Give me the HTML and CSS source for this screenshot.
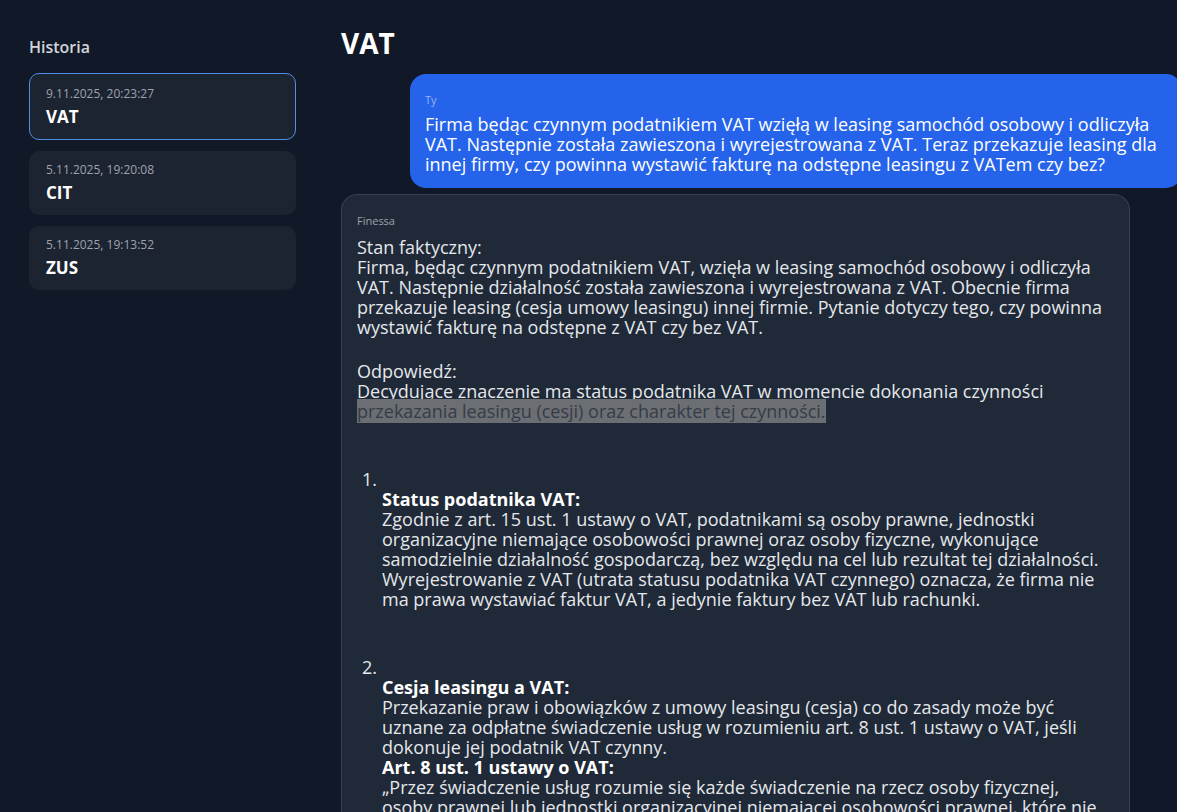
FILE: index.html
```html
<!DOCTYPE html>
<html lang="pl">
  <head>
    <meta charset="UTF-8" />
    <title>Finessa – VAT</title>
    <link rel="stylesheet" href="styles.css">
  </head>
  <body>
    <aside class="sidebar">
      <h2 class="sidebar-title">Historia</h2>
      <div class="history">
        <div class="history-item active">
          <div class="history-date">9.11.2025, 20:23:27</div>
          <div class="history-name">VAT</div>
        </div>
        <div class="history-item">
          <div class="history-date">5.11.2025, 19:20:08</div>
          <div class="history-name">CIT</div>
        </div>
        <div class="history-item">
          <div class="history-date">5.11.2025, 19:13:52</div>
          <div class="history-name">ZUS</div>
        </div>
      </div>
    </aside>

    <main class="chat">
      <h1 class="chat-title">VAT</h1>

      <div class="msg msg-user">
        <div class="msg-author">Ty</div>
        <div class="msg-text">Firma będąc czynnym podatnikiem VAT wzięłą w leasing samochód osobowy i odliczyła<br>VAT. Następnie została zawieszona i wyrejestrowana z VAT. Teraz przekazuje leasing dla<br>innej firmy, czy powinna wystawić fakturę na odstępne leasingu z VATem czy bez?</div>
      </div>

      <div class="msg msg-bot">
        <div class="msg-author">Finessa</div>
        <div class="msg-text">
          <p>Stan faktyczny:<br>Firma, będąc czynnym podatnikiem VAT, wzięła w leasing samochód osobowy i odliczyła<br>VAT. Następnie działalność została zawieszona i wyrejestrowana z VAT. Obecnie firma<br>przekazuje leasing (cesja umowy leasingu) innej firmie. Pytanie dotyczy tego, czy powinna<br>wystawić fakturę na odstępne z VAT czy bez VAT.</p>
          <p>Odpowiedź:<br>Decydujące znaczenie ma status podatnika VAT w momencie dokonania czynności<br><span class="selected">przekazania leasingu (cesji) oraz charakter tej czynności.</span></p>

          <div class="item">
            <div class="item-num">1.</div>
            <div class="item-body">
              <strong>Status podatnika VAT:</strong><br>Zgodnie z art. 15 ust. 1 ustawy o VAT, podatnikami są osoby prawne, jednostki<br>organizacyjne niemające osobowości prawnej oraz osoby fizyczne, wykonujące<br>samodzielnie działalność gospodarczą, bez względu na cel lub rezultat tej działalności.<br>Wyrejestrowanie z VAT (utrata statusu podatnika VAT czynnego) oznacza, że firma nie<br>ma prawa wystawiać faktur VAT, a jedynie faktury bez VAT lub rachunki.
            </div>
          </div>

          <div class="item">
            <div class="item-num">2.</div>
            <div class="item-body">
              <strong>Cesja leasingu a VAT:</strong><br>Przekazanie praw i obowiązków z umowy leasingu (cesja) co do zasady może być<br>uznane za odpłatne świadczenie usług w rozumieniu art. 8 ust. 1 ustawy o VAT, jeśli<br>dokonuje jej podatnik VAT czynny.<br><strong>Art. 8 ust. 1 ustawy o VAT:</strong><br>„Przez świadczenie usług rozumie się każde świadczenie na rzecz osoby fizycznej,<br>osoby prawnej lub jednostki organizacyjnej niemającej osobowości prawnej, które nie
            </div>
          </div>
        </div>
      </div>
    </main>
  </body>
</html>
```

FILE: styles.css
```css
body {
  margin: 0;
  display: flex;
  background-color: #111827;
  color: #e5e7eb;
  font-family: "Open Sans", "Noto Sans", sans-serif;
  overflow: hidden;
  height: 812px;
}

.sidebar {
  width: 320px;
  flex-shrink: 0;
  box-sizing: border-box;
  padding: 37px 24px 0 29px;
}

.sidebar-title {
  margin: 0 0 16px;
  font-size: 16px;
  line-height: 20px;
  font-weight: 600;
  color: #d1d5db;
}

.history {
  display: flex;
  flex-direction: column;
  gap: 11px;
}

.history-item {
  background-color: #1c2331;
  border: 1px solid transparent;
  border-radius: 10px;
  padding: 10px 16px 9px;
}

.history-item.active {
  border-color: #4f8fe6;
  padding-top: 12px;
  padding-bottom: 10px;
}

.history-date {
  font-size: 12px;
  line-height: 16px;
  color: #9ca3af;
  margin-bottom: 3px;
}

.history-name {
  font-size: 17px;
  line-height: 24px;
  font-weight: 700;
  color: #ffffff;
}

.chat {
  flex: 1;
  min-width: 0;
  padding: 26px 0 0 21px;
}

.chat-title {
  margin: 0 0 14px;
  font-size: 28px;
  line-height: 34px;
  font-weight: 700;
  color: #ffffff;
}

.msg {
  border-radius: 16px;
  box-sizing: border-box;
}

.msg-author {
  font-size: 11px;
  line-height: 16px;
}

.msg-text {
  font-size: 18px;
  line-height: 20px;
  white-space: nowrap;
}

.msg-user {
  width: 772px;
  margin: 0 -15px 6px 69px;
  padding: 18px 15px 14px;
  background-color: #2563eb;
  color: #ffffff;
}

.msg-user .msg-author {
  color: #93b4f5;
  margin-bottom: 6px;
}

.msg-bot {
  width: 789px;
  padding: 18px 15px 20px;
  background-color: #1f2937;
  border: 1px solid #374151;
  border-bottom: none;
  border-bottom-left-radius: 0;
  border-bottom-right-radius: 0;
  min-height: 640px;
}

.msg-bot .msg-author {
  color: #9ca3af;
  margin-bottom: 8px;
}

.msg-bot p {
  margin: 0 0 24px;
}

.selected {
  background-color: #6b6e73;
  color: #363c47;
}

.item {
  margin-top: 48px;
}

.item-num {
  padding-left: 5px;
}

.item-body {
  padding-left: 25px;
}

.item-body strong {
  color: #ffffff;
}
```
